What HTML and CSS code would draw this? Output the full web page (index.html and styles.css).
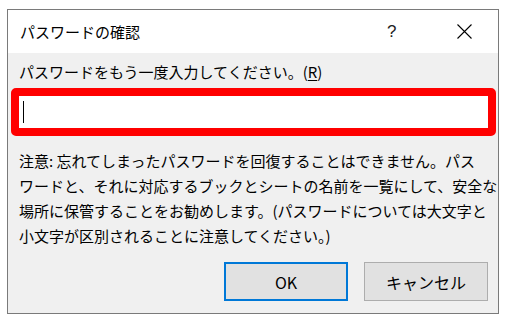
FILE: index.html
```html
<!DOCTYPE html>
<html lang="ja">
<head>
    <meta charset="UTF-8">
    <title>パスワードの確認</title>
    <link rel="stylesheet" href="styles.css">
</head>
<body>
    <div class="dialog">
        <div class="titlebar">
            <span class="title">パスワードの確認</span>
            <span class="help">?</span>
            <span class="close">
                <svg width="15" height="15" viewBox="0 0 15 15"><path d="M0.5 0.5 L14.5 14.5 M14.5 0.5 L0.5 14.5" stroke="#000" stroke-width="1.1" fill="none"/></svg>
            </span>
        </div>
        <div class="content">
            <div class="label">パスワードをもう一度入力してください。(<u>R</u>)</div>
            <div class="input-box"><span class="caret"></span></div>
            <p class="note">注意: 忘れてしまったパスワードを回復することはできません。パス<br>ワードと、それに対応するブックとシートの名前を一覧にして、安全な<br>場所に保管することをお勧めします。(パスワードについては大文字と<br>小文字が区別されることに注意してください。)</p>
            <div class="buttons">
                <button class="btn btn-default">OK</button>
                <button class="btn">キャンセル</button>
            </div>
        </div>
    </div>
</body>
</html>
```

FILE: styles.css
```css
body {
    margin: 0;
    background: #ffffff;
    font-family: "Noto Sans CJK JP", "Noto Sans", sans-serif;
    color: #000;
}
.dialog {
    margin: 9px 0 0 7px;
    width: 490px;
    height: 303px;
    border: 1px solid #7a7a7a;
    background: #f0f0f0;
    display: flex;
    flex-direction: column;
}
.titlebar {
    height: 43px;
    background: #ffffff;
    display: flex;
    align-items: center;
    padding-left: 12px;
    font-size: 15px;
}
.title {
    flex: 1;
}
.help {
    width: 8px;
    margin-right: 62px;
    font-family: "Liberation Sans", sans-serif;
    font-size: 17px;
    font-weight: 300;
    color: #222;
}
.close {
    width: 15px;
    height: 15px;
    margin-right: 26px;
    display: flex;
}
.content {
    flex: 1;
    padding: 0 2px 0 3px;
}
.label {
    margin: 9px 0 0 8px;
    font-size: 15px;
    line-height: 20px;
    white-space: nowrap;
}
.label u {
    text-underline-offset: 2px;
}
.input-box {
    margin-top: 6px;
    height: 32px;
    border: 8px solid #ff0000;
    border-radius: 5px;
    background: #ffffff;
    display: flex;
    align-items: center;
    padding-left: 4px;
}
.caret {
    width: 1px;
    height: 22px;
    background: #000;
}
.note {
    margin: 12px 0 0 8px;
    font-size: 15px;
    line-height: 25px;
    white-space: nowrap;
}
.buttons {
    margin-top: 14px;
    display: flex;
    justify-content: flex-end;
    gap: 16px;
    padding-right: 8px;
}
.btn {
    width: 124px;
    height: 39px;
    background: #e1e1e1;
    border: 1px solid #adadad;
    font-family: "Noto Sans CJK JP", "Noto Sans", sans-serif;
    font-size: 16px;
    color: #000;
    padding: 0;
}
.btn-default {
    border: 2px solid #0078d7;
}
```
